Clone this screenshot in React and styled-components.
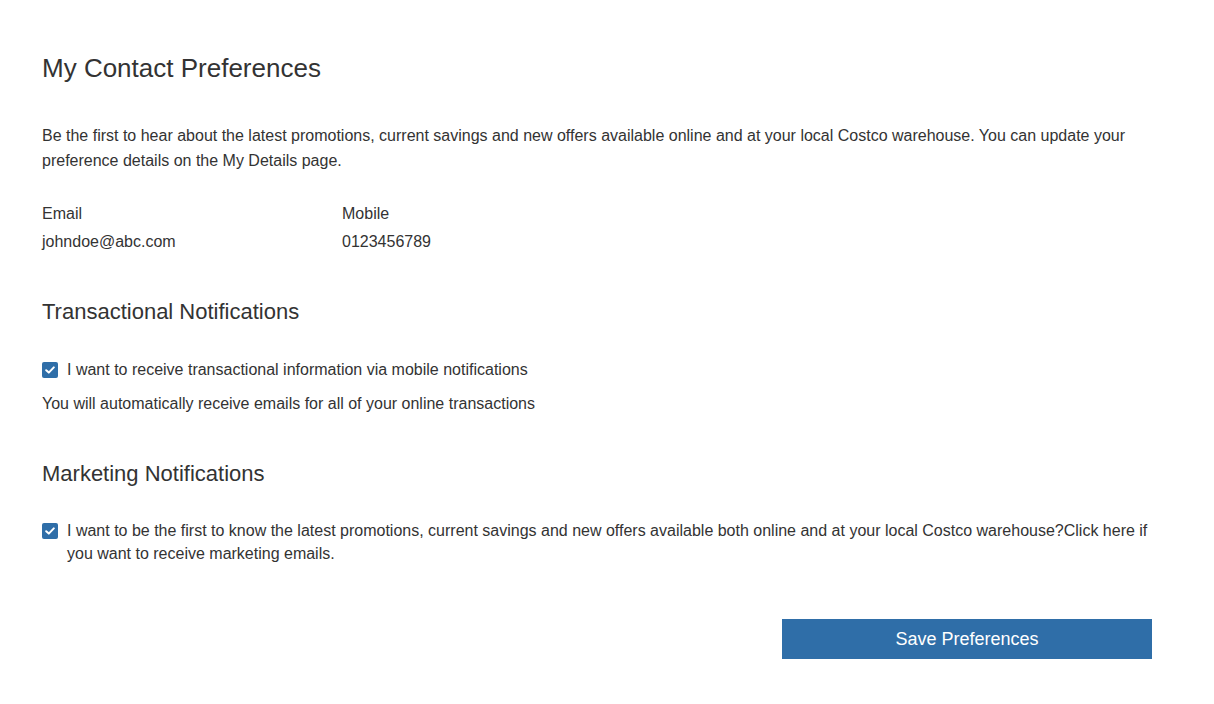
import React, { useState } from "react";
import styled, { createGlobalStyle } from "styled-components";

const GlobalStyle = createGlobalStyle`
  html, body {
    margin: 0;
    padding: 0;
    background: #fff;
  }
  body {
    font-family: "Liberation Sans", Arial, sans-serif;
    color: #333;
  }
`;

const Page = styled.div`
  width: 1110px;
  padding: 52px 0 40px 42px;
`;

const Title = styled.h1`
  margin: 0;
  font-size: 26px;
  font-weight: 400;
  line-height: 32px;
  color: #333;
`;

const SectionTitle = styled.h2`
  margin: ${(p) => p.$top || 0}px 0 0;
  font-size: 22px;
  font-weight: 400;
  line-height: 28px;
  color: #333;
`;

const Text = styled.p`
  margin: ${(p) => p.$top || 0}px 0 0;
  font-size: 16px;
  line-height: ${(p) => p.$lh || 25}px;
`;

const ContactGrid = styled.div`
  display: grid;
  grid-template-columns: 300px 300px;
  row-gap: 3px;
  margin-top: 28px;
  font-size: 16px;
  line-height: 25px;
`;

const CheckRow = styled.label`
  display: flex;
  align-items: flex-start;
  gap: 9px;
  margin-top: ${(p) => p.$top || 0}px;
  font-size: 16px;
  line-height: 23px;
  cursor: pointer;
`;

const Box = styled.span`
  flex: 0 0 16px;
  width: 16px;
  height: 16px;
  margin-top: 4px;
  border-radius: 2px;
  background: ${(p) => (p.$checked ? "#2f6ea8" : "#fff")};
  border: ${(p) => (p.$checked ? "none" : "1px solid #999")};
  box-sizing: border-box;
  display: flex;
  align-items: center;
  justify-content: center;
`;

const HiddenInput = styled.input`
  display: none;
`;

const Actions = styled.div`
  display: flex;
  justify-content: flex-end;
  margin-top: 54px;
`;

const SaveButton = styled.button`
  width: 370px;
  height: 40px;
  border: none;
  background: #2f6ea8;
  color: #fff;
  font-family: "Liberation Sans", Arial, sans-serif;
  font-size: 18px;
  cursor: pointer;
`;

const Check = ({ checked, onChange, children, top }) => (
  <CheckRow $top={top}>
    <HiddenInput type="checkbox" checked={checked} onChange={onChange} />
    <Box $checked={checked}>
      {checked && (
        <svg width="10" height="8" viewBox="0 0 10 8">
          <path
            d="M1.2 4.2 L3.8 6.6 L8.8 1.4"
            fill="none"
            stroke="#fff"
            strokeWidth="2"
            strokeLinecap="round"
            strokeLinejoin="round"
          />
        </svg>
      )}
    </Box>
    <span>{children}</span>
  </CheckRow>
);

export default function App() {
  const [mobileNotif, setMobileNotif] = useState(true);
  const [marketing, setMarketing] = useState(true);

  return (
    <>
      <GlobalStyle />
      <Page>
        <Title>My Contact Preferences</Title>
        <Text $top={39}>
          Be the first to hear about the latest promotions, current savings and new offers available online and at
          your local Costco warehouse. You can update your preference details on the My Details page.
        </Text>
        <ContactGrid>
          <div>Email</div>
          <div>Mobile</div>
          <div>johndoe@abc.com</div>
          <div>0123456789</div>
        </ContactGrid>
        <SectionTitle $top={44}>Transactional Notifications</SectionTitle>
        <Check top={32} checked={mobileNotif} onChange={() => setMobileNotif(!mobileNotif)}>
          I want to receive transactional information via mobile notifications
        </Check>
        <Text $top={10}>You will automatically receive emails for all of your online transactions</Text>
        <SectionTitle $top={44}>Marketing Notifications</SectionTitle>
        <Check top={31} checked={marketing} onChange={() => setMarketing(!marketing)}>
          I want to be the first to know the latest promotions, current savings and new offers available both
          online and at your local Costco warehouse?Click here if you want to receive marketing emails.
        </Check>
        <Actions>
          <SaveButton>Save Preferences</SaveButton>
        </Actions>
      </Page>
    </>
  );
}
